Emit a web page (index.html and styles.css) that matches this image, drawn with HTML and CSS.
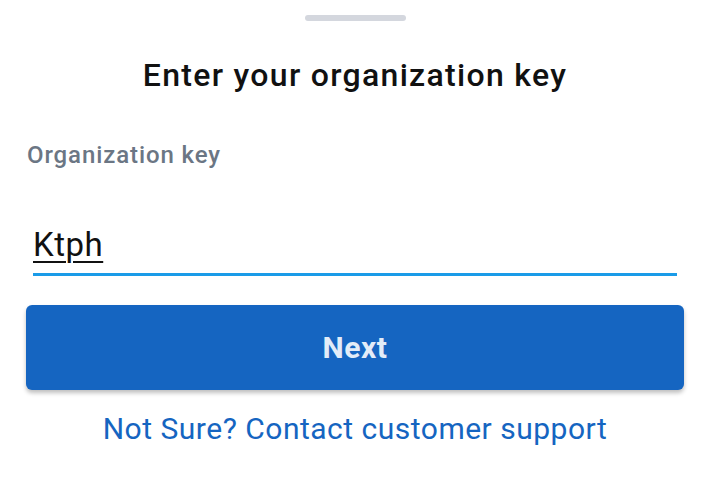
FILE: index.html
```html
<!DOCTYPE html>
<html>
<head>
<meta charset="utf-8">
<link rel="stylesheet" href="styles.css">
</head>
<body>
<div class="sheet">
  <div class="handle"></div>
  <h1 class="title">Enter your organization key</h1>
  <div class="field">
    <label class="label">Organization key</label>
    <div class="input"><span class="value">Ktph</span></div>
  </div>
  <button class="next">Next</button>
  <a class="support">Not Sure? Contact customer support</a>
</div>
</body>
</html>
```
FILE: styles.css
```css
html, body {
  margin: 0;
  padding: 0;
  background: #ffffff;
  font-family: Roboto, "Noto Sans", sans-serif;
}
.sheet {
  width: 715px;
  height: 493px;
  display: flex;
  flex-direction: column;
  align-items: center;
  box-sizing: border-box;
  padding: 15px 5px 0 0;
}
.handle {
  width: 101px;
  height: 6px;
  border-radius: 3px;
  background: #d4d7de;
}
.title {
  margin: 35px 0 0;
  font-size: 32px;
  font-weight: 500;
  letter-spacing: 1.3px;
  color: #111111;
  line-height: 38px;
}
.field {
  align-self: stretch;
  padding: 0 33px 0 27px;
  margin-top: 46px;
}
.label {
  display: block;
  font-size: 24px;
  font-weight: 500;
  letter-spacing: 0.9px;
  color: #6b7684;
  line-height: 30px;
}
.input {
  margin: 55px 0 0 6px;
  padding-bottom: 8px;
  border-bottom: 3px solid #1a9be8;
  line-height: 40px;
  height: 40px;
}
.value {
  font-size: 33px;
  letter-spacing: 0.5px;
  color: #111111;
  text-decoration: underline;
  text-decoration-thickness: 2px;
  text-underline-offset: 5px;
}
.next {
  margin-top: 29px;
  width: 658px;
  height: 85px;
  border: none;
  border-radius: 6px;
  background: #1565c1;
  color: #e2ecf8;
  font-family: Roboto, sans-serif;
  font-size: 30px;
  font-weight: 700;
  letter-spacing: 0.6px;
  box-shadow: 0 3px 4px rgba(0,0,0,0.25);
}
.support {
  margin-top: 21px;
  font-size: 30px;
  letter-spacing: 0.5px;
  color: #1565c1;
  line-height: 36px;
}
```
